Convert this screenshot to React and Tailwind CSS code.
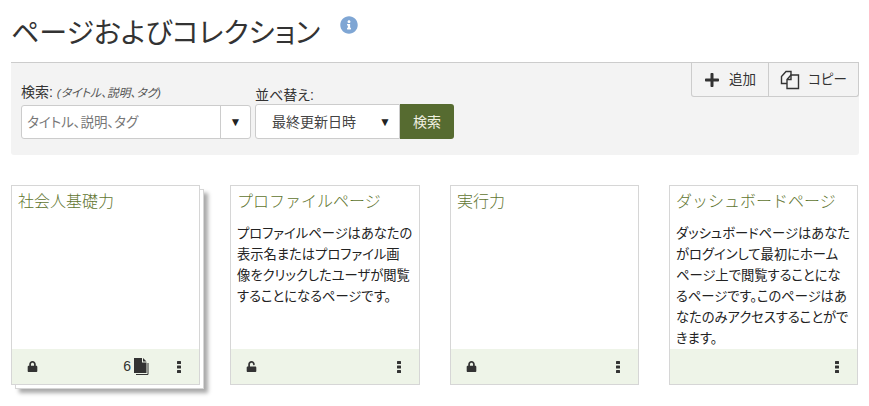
import React from 'react';
import { FaInfoCircle, FaPlus, FaLock, FaUnlock } from 'react-icons/fa';

const pages = [
  { title: '社会人基礎力', locked: true, stacked: true, count: 6 },
  {
    title: 'プロファイルページ',
    text: 'プロファイルページはあなたの\n表示名またはプロファイル画\n像をクリックしたユーザが閲覧\nすることになるページです。',
    open: true,
  },
  { title: '実行力', locked: true },
  {
    title: 'ダッシュボードページ',
    text: 'ダッシュボードページはあなた\nがログインして最初にホーム\nページ上で閲覧することにな\nるページです。このページはあ\nなたのみアクセスすることがで\nきます。',
  },
];

const CopyIcon = () => (
  <svg width="20" height="20" viewBox="0 0 20 20" fill="none" stroke="#333" strokeWidth="1.4">
    <path d="M7 13.5H1.5V6.5L6 1.5H11V5" />
    <path d="M7 13.5V9.5L11 5H18.5V18.5H7V13.5Z" fill="#f3f3f3" />
    <path d="M7 9.5H11V5" />
  </svg>
);

const PagesIcon = () => (
  <svg width="15" height="17" viewBox="0 0 15 17" className="ml-[3px]">
    <path d="M0 0H8V4.5H12.5V15H0Z" fill="#333" />
    <path d="M9 0L12.5 3.5H9Z" fill="#333" />
    <path d="M14 5V16.5H2" fill="none" stroke="#333" strokeWidth="1" />
  </svg>
);

const MenuDots = () => (
  <svg width="4" height="12" viewBox="0 0 4 12" fill="#333">
    <rect y="0" width="4" height="3" rx="0.5" />
    <rect y="4.5" width="4" height="3" rx="0.5" />
    <rect y="9" width="4" height="3" rx="0.5" />
  </svg>
);

const PageCard = ({ page }) => (
  <div className="relative h-[200px]">
    {page.stacked && (
      <div className="absolute top-[4px] left-[4px] h-full w-full border border-[#d6d6d6] bg-white shadow-[4px_4px_4px_#aaa]" />
    )}
    <div className="relative flex h-full flex-col border border-[#d6d6d6] bg-white">
      <div className="flex-1 overflow-hidden px-[6px] pt-[5px]">
        <h3 className="text-[16px] leading-[22px] font-light text-[#5f7530] [font-feature-settings:normal]">
          {page.title}
        </h3>
        {page.text && (
          <p className="mt-[10px] text-[13.3px] leading-[21px] whitespace-pre text-[#222]">{page.text}</p>
        )}
      </div>
      <div className="flex h-[35px] items-center bg-[#eef4e8] pr-[18px] pl-[15px] text-[#333]">
        {page.locked && <FaLock size={11} />}
        {page.open && <FaUnlock size={11} />}
        <div className="ml-auto flex items-center">
          {page.count && (
            <span className="mr-[28px] flex items-center text-[14px]">
              {page.count}
              <PagesIcon />
            </span>
          )}
          <MenuDots />
        </div>
      </div>
    </div>
  </div>
);

export default function App() {
  return (
    <div className="min-h-[406px] w-[869px] bg-white pr-[10px] pl-[11px] font-['Liberation_Sans','Noto_Sans_CJK_JP',sans-serif] text-[#333] [font-feature-settings:'palt']">
      <div className="flex h-[62px] items-start">
        <h1 className="mt-[17px] text-[28px] leading-[34px] font-normal">ページおよびコレクション</h1>
        <FaInfoCircle size={18} className="mt-[16px] ml-[20px] text-[#7fa6d4]" />
      </div>

      <div className="flex h-[93px] items-start justify-between rounded-b-[3px] border-t border-[#ccc] bg-[#f3f3f3]">
        <div className="flex items-start pt-[20px] pl-[10px]">
          <div className="w-[230px]">
            <div className="h-[22px] text-[14px] leading-[18px]">
              検索: <em className="text-[11.7px] text-[#555]">(タイトル、説明、タグ)</em>
            </div>
            <div className="flex h-[34px] rounded-[3px] border border-[#ccc] bg-white">
              <span className="flex-1 pl-[5px] text-[13.5px] leading-[34px] text-[#777]">タイトル、説明、タグ</span>
              <span className="w-[30px] border-l border-[#ccc] text-center text-[12px] leading-[32px] text-[#222]">▼</span>
            </div>
          </div>
          <div className="ml-[4px] pt-[3px]">
            <div className="h-[18px] text-[14px] leading-[18px]">並べ替え:</div>
            <div className="flex">
              <div className="flex h-[35px] w-[145px] items-center justify-between rounded-l-[3px] border border-[#ccc] bg-white pr-[8px] pl-[16px] text-[14px] text-[#444]">
                <span className="pt-[2px]">最終更新日時</span>
                <span className="text-[12px] text-[#222]">▼</span>
              </div>
              <button className="h-[35px] w-[54px] rounded-r-[3px] bg-[#566b30] pt-[1px] text-[14px] text-[#f0f0e0]">検索</button>
            </div>
          </div>
        </div>
        <div className="flex h-[34px] items-center rounded-b-[3px] border-r border-b border-l border-[#ccc] text-[13.5px] text-[#333]">
          <span className="flex h-full w-[77px] items-center justify-center gap-[9px] border-r border-[#ccc] pt-[1px]">
            <FaPlus size={16} />追加
          </span>
          <span className="flex h-full w-[89px] items-center justify-center gap-[8px] pt-[1px]">
            <CopyIcon />コピー
          </span>
        </div>
      </div>

      <div className="mt-[30px] grid grid-cols-[189px_190px_189px_189px] gap-[30px]">
        {pages.map((page) => (
          <PageCard key={page.title} page={page} />
        ))}
      </div>
    </div>
  );
}
